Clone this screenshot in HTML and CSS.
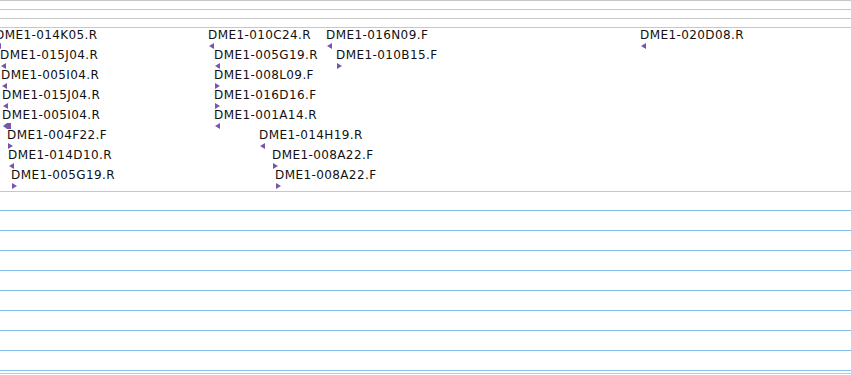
FILE: index.html
```html
<!DOCTYPE html>
<html>
<head>
<meta charset="utf-8">
<link rel="stylesheet" href="styles.css">
</head>
<body>
<div class="track">
  <div class="ruler">
    <div class="tick"></div>
    <div class="tick"></div>
    <div class="tick"></div>
  </div>
  <div class="features">
    <div class="lane">
      <div class="feat" style="left:-5px"><span class="label">DME1-014K05.R</span><svg class="arrow" viewBox="0 0 5 6"><polygon points="0,3 5,0 5,6"/></svg></div>
      <div class="feat" style="left:208px"><span class="label">DME1-010C24.R</span><svg class="arrow" viewBox="0 0 5 6"><polygon points="0,3 5,0 5,6"/></svg></div>
      <div class="feat" style="left:326px"><span class="label">DME1-016N09.F</span><svg class="arrow" viewBox="0 0 5 6"><polygon points="0,3 5,0 5,6"/></svg></div>
      <div class="feat" style="left:640px"><span class="label">DME1-020D08.R</span><svg class="arrow" viewBox="0 0 5 6"><polygon points="0,3 5,0 5,6"/></svg></div>
    </div>
    <div class="lane">
      <div class="feat" style="left:0px"><span class="label">DME1-015J04.R</span><svg class="arrow" viewBox="0 0 5 6"><polygon points="0,3 5,0 5,6"/></svg></div>
      <div class="feat" style="left:214px"><span class="label">DME1-005G19.R</span><svg class="arrow" viewBox="0 0 5 6"><polygon points="0,3 5,0 5,6"/></svg></div>
      <div class="feat" style="left:336px"><span class="label">DME1-010B15.F</span><svg class="arrow" viewBox="0 0 5 6"><polygon points="0,0 5,3 0,6"/></svg></div>
    </div>
    <div class="lane">
      <div class="feat" style="left:1px"><span class="label">DME1-005I04.R</span><svg class="arrow" viewBox="0 0 5 6"><polygon points="0,3 5,0 5,6"/></svg></div>
      <div class="feat" style="left:214px"><span class="label">DME1-008L09.F</span><svg class="arrow" viewBox="0 0 5 6"><polygon points="0,0 5,3 0,6"/></svg></div>
    </div>
    <div class="lane">
      <div class="feat" style="left:2px"><span class="label">DME1-015J04.R</span><svg class="arrow" viewBox="0 0 5 6"><polygon points="0,3 5,0 5,6"/></svg></div>
      <div class="feat" style="left:214px"><span class="label">DME1-016D16.F</span><svg class="arrow" viewBox="0 0 5 6"><polygon points="0,0 5,3 0,6"/></svg></div>
    </div>
    <div class="lane">
      <div class="feat" style="left:2px"><span class="label">DME1-005I04.R</span><svg class="arrow wide" viewBox="0 0 8 6"><polygon points="0,3 4,0 8,0 8,6 4,6"/></svg></div>
      <div class="feat" style="left:214px"><span class="label">DME1-001A14.R</span><svg class="arrow" viewBox="0 0 5 6"><polygon points="0,3 5,0 5,6"/></svg></div>
    </div>
    <div class="lane">
      <div class="feat" style="left:7px"><span class="label">DME1-004F22.F</span><svg class="arrow" viewBox="0 0 5 6"><polygon points="0,0 5,3 0,6"/></svg></div>
      <div class="feat" style="left:259px"><span class="label">DME1-014H19.R</span><svg class="arrow" viewBox="0 0 5 6"><polygon points="0,3 5,0 5,6"/></svg></div>
    </div>
    <div class="lane">
      <div class="feat" style="left:8px"><span class="label">DME1-014D10.R</span><svg class="arrow" viewBox="0 0 5 6"><polygon points="0,3 5,0 5,6"/></svg></div>
      <div class="feat" style="left:272px"><span class="label">DME1-008A22.F</span><svg class="arrow" viewBox="0 0 5 6"><polygon points="0,0 5,3 0,6"/></svg></div>
    </div>
    <div class="lane">
      <div class="feat" style="left:11px"><span class="label">DME1-005G19.R</span><svg class="arrow" viewBox="0 0 5 6"><polygon points="0,0 5,3 0,6"/></svg></div>
      <div class="feat" style="left:275px"><span class="label">DME1-008A22.F</span><svg class="arrow" viewBox="0 0 5 6"><polygon points="0,0 5,3 0,6"/></svg></div>
    </div>
  </div>
  <div class="grid">
    <div class="gline"></div>
    <div class="gline"></div>
    <div class="gline"></div>
    <div class="gline"></div>
    <div class="gline"></div>
    <div class="gline"></div>
    <div class="gline"></div>
    <div class="gline"></div>
    <div class="gline"></div>
  </div>
</div>
</body>
</html>
```

FILE: styles.css
```css
html, body {
  margin: 0;
  padding: 0;
  background: #ffffff;
}

body {
  width: 851px;
  height: 375px;
  overflow: hidden;
  font-family: "DejaVu Sans", sans-serif;
  color: #111111;
}

.track {
  width: 851px;
  display: flex;
  flex-direction: column;
}

.ruler {
  border-top: 1px solid #c8c8c8;
}

.tick {
  height: 8px;
  border-bottom: 1px solid #c8c8c8;
}

.features {
  display: flex;
  flex-direction: column;
  height: 163px;
  border-bottom: 1px solid #c8c8c8;
}

.lane {
  position: relative;
  height: 20px;
  flex: 0 0 20px;
}

.feat {
  position: absolute;
  top: 0;
  display: flex;
  flex-direction: column;
  align-items: flex-start;
}

.label {
  font-size: 12px;
  line-height: 14px;
  letter-spacing: 0.4px;
  white-space: nowrap;
}

.arrow {
  display: block;
  margin-top: 1px;
  margin-left: 1px;
  width: 5px;
  height: 6px;
  fill: #7757ab;
}

.arrow.wide {
  width: 8px;
}

.grid {
  padding-bottom: 2px;
  border-bottom: 1px solid #c8c8c8;
}

.gline {
  height: 19px;
  border-bottom: 1px solid #88bfe9;
}

.gline:first-child {
  height: 18px;
}
```
